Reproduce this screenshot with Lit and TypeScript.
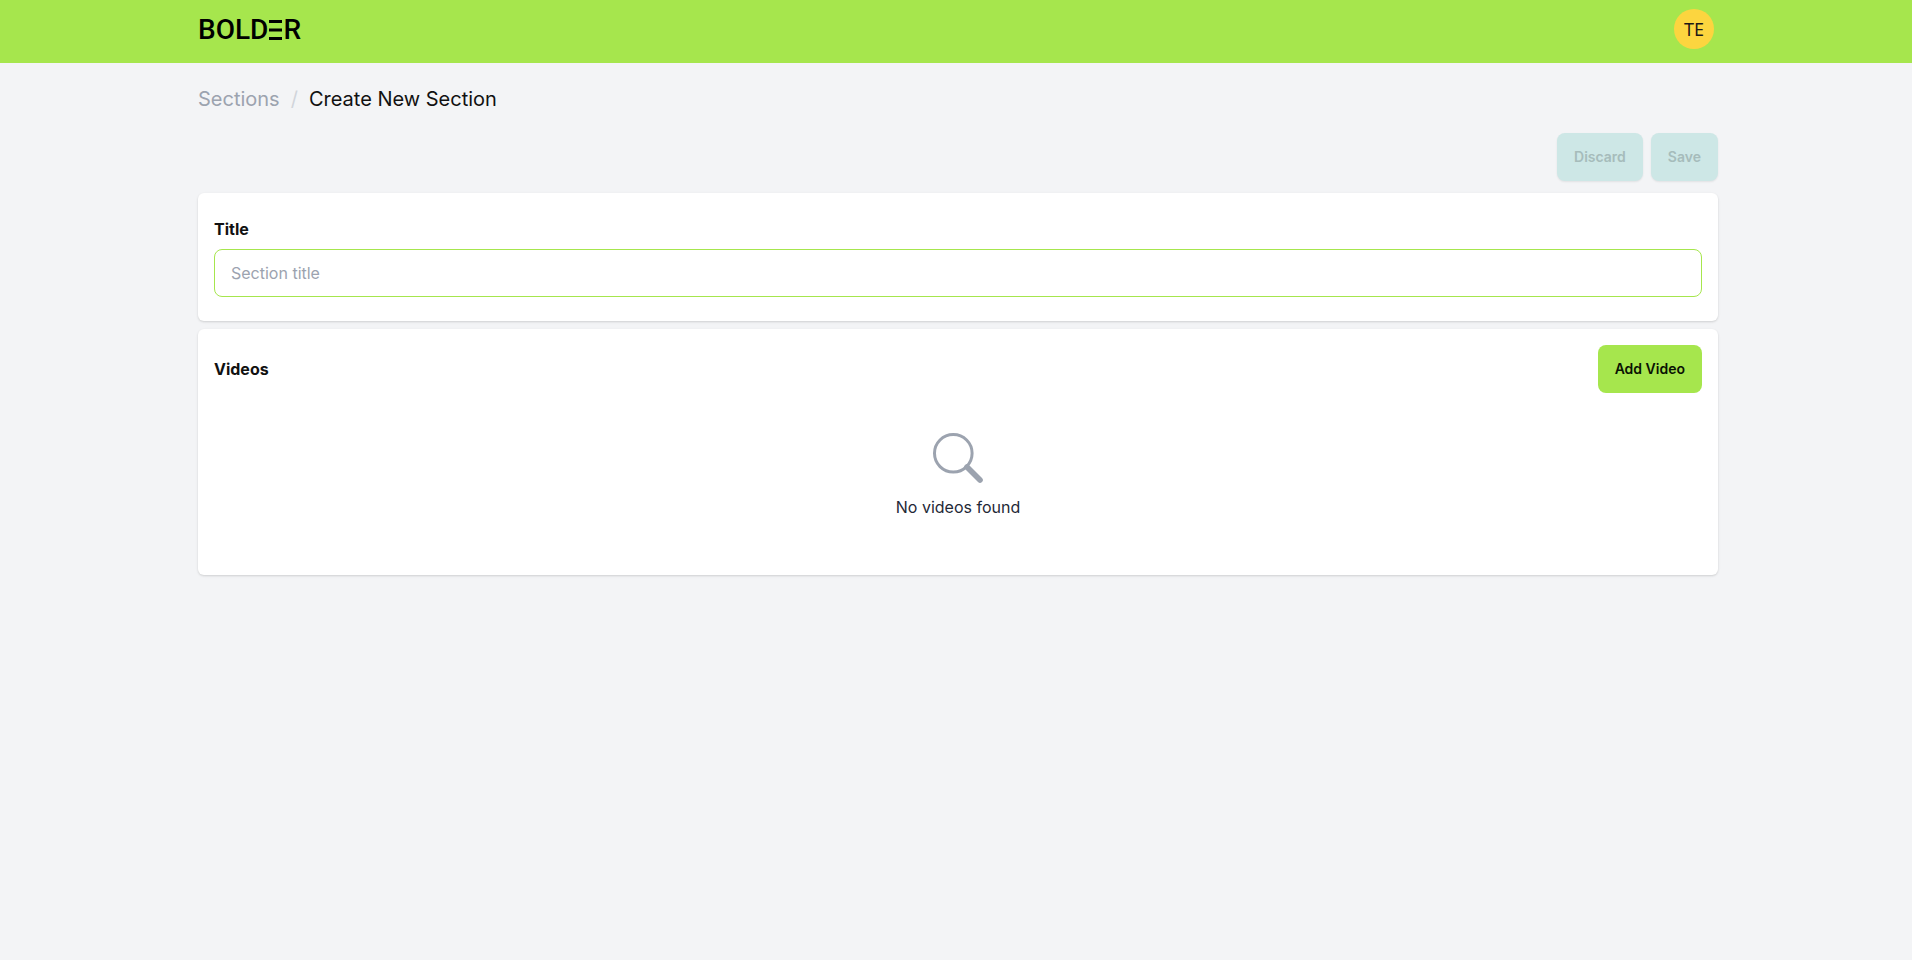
import { LitElement, html, css } from "lit";
import { customElement, state } from "lit/decorators.js";

@customElement("app-root")
export class AppRoot extends LitElement {
  static styles = css`
    :host {
      display: block;
      min-height: 100vh;
      background: #f3f4f6;
      color: #111;
      font: 400 16px/24px Inter, sans-serif;
    }
    * {
      box-sizing: border-box;
    }
    .header {
      background: #a6e64d;
    }
    .container {
      max-width: 1536px;
      margin: 0 auto;
      padding: 0 6px 0 10px;
    }
    .bar {
      display: flex;
      align-items: center;
      justify-content: space-between;
      height: 63px;
      padding-bottom: 5px;
      padding-right: 4px;
    }
    .logo {
      display: flex;
      align-items: center;
      gap: 1px;
      padding-top: 2px;
      color: #000;
      text-decoration: none;
      font: 500 28px/32px Roboto, sans-serif;
    }
    .bars {
      width: 13px;
      height: 20px;
    }
    .avatar {
      width: 40px;
      height: 40px;
      padding: 0;
      border: 0;
      border-radius: 50%;
      background: #fcd53f;
      color: #1c1917;
      font: 400 18px/28px "Noto Sans", sans-serif;
    }
    .crumbs {
      display: flex;
      gap: 11px;
      padding: 23px 0 21px;
      font-size: 20px;
      line-height: 26px;
    }
    .crumbs a {
      color: #9ca3af;
      text-decoration: none;
    }
    .slash {
      color: #d1d5db;
    }
    .stack {
      display: flex;
      flex-direction: column;
      gap: 8px;
    }
    .actions {
      display: flex;
      justify-content: flex-end;
      gap: 8px;
      padding-bottom: 4px;
    }
    .btn {
      height: 48px;
      padding: 0 17px;
      border: 0;
      border-radius: 8px;
      background: #a6e64d;
      color: #0a1203;
      font: 600 14px/20px Inter, sans-serif;
    }
    .btn:disabled {
      background: #cde7e6;
      color: #a6bcbb;
      box-shadow: 0 1px 2px rgba(0, 0, 0, 0.08);
    }
    .card {
      padding: 16px;
      border-radius: 6px;
      background: #fff;
      box-shadow: 0 1px 3px rgba(0, 0, 0, 0.1), 0 1px 2px rgba(0, 0, 0, 0.06);
    }
    .field {
      display: flex;
      flex-direction: column;
      gap: 8px;
      padding: 8px 0;
    }
    .label {
      font-weight: 700;
    }
    .input {
      width: 100%;
      height: 48px;
      padding: 0 16px;
      border: 1px solid #a6e64d;
      border-radius: 8px;
      outline: 0;
      background: #fff;
      color: #111;
      font: 400 16px/24px Inter, sans-serif;
    }
    .input::placeholder {
      color: #9ca3af;
      opacity: 1;
    }
    .card-head {
      display: flex;
      align-items: center;
      justify-content: space-between;
    }
    .heading {
      margin: 0;
      font-size: 16px;
      line-height: 24px;
      font-weight: 700;
    }
    .empty {
      display: flex;
      flex-direction: column;
      align-items: center;
      gap: 12px;
      padding: 40px 0;
      color: #1f2937;
    }
    .empty p {
      margin: 0;
    }
    .glass {
      display: block;
      width: 50px;
      height: 50px;
    }
  `;

  @state() private title_ = "";

  private onInput(e: Event) {
    this.title_ = (e.target as HTMLInputElement).value;
  }

  render() {
    const clean = this.title_ === "";
    return html`
      <header class="header">
        <div class="container">
          <div class="bar">
            <a class="logo" href="#" aria-label="Bolder">
              <span>BOLD</span>
              <svg class="bars" viewBox="0 0 13 20" aria-hidden="true">
                <path d="M0 1.5h13M0 10h13M0 18.5h13" stroke="#000" stroke-width="3" />
              </svg>
              <span>R</span>
            </a>
            <button class="avatar" aria-label="Account TE">TE</button>
          </div>
        </div>
      </header>
      <main class="container">
        <nav class="crumbs" aria-label="Breadcrumb">
          <a href="#">Sections</a>
          <span class="slash" aria-hidden="true">/</span>
          <span aria-current="page">Create New Section</span>
        </nav>
        <div class="stack">
          <div class="actions">
            <button class="btn" ?disabled=${clean}>Discard</button>
            <button class="btn" ?disabled=${clean}>Save</button>
          </div>
          <section class="card">
            <div class="field">
              <label class="label" for="title">Title</label>
              <input
                class="input"
                id="title"
                type="text"
                placeholder="Section title"
                .value=${this.title_}
                @input=${this.onInput}
              />
            </div>
          </section>
          <section class="card">
            <div class="card-head">
              <h2 class="heading">Videos</h2>
              <button class="btn">Add Video</button>
            </div>
            <div class="empty">
              <svg class="glass" viewBox="0 0 50 50" fill="none" stroke="#9ca3af" aria-hidden="true">
                <circle cx="20.3" cy="20.3" r="18.8" stroke-width="3" />
                <path d="M34 34L47 47" stroke-width="5.6" stroke-linecap="round" />
              </svg>
              <p>No videos found</p>
            </div>
          </section>
        </div>
      </main>
    `;
  }
}
